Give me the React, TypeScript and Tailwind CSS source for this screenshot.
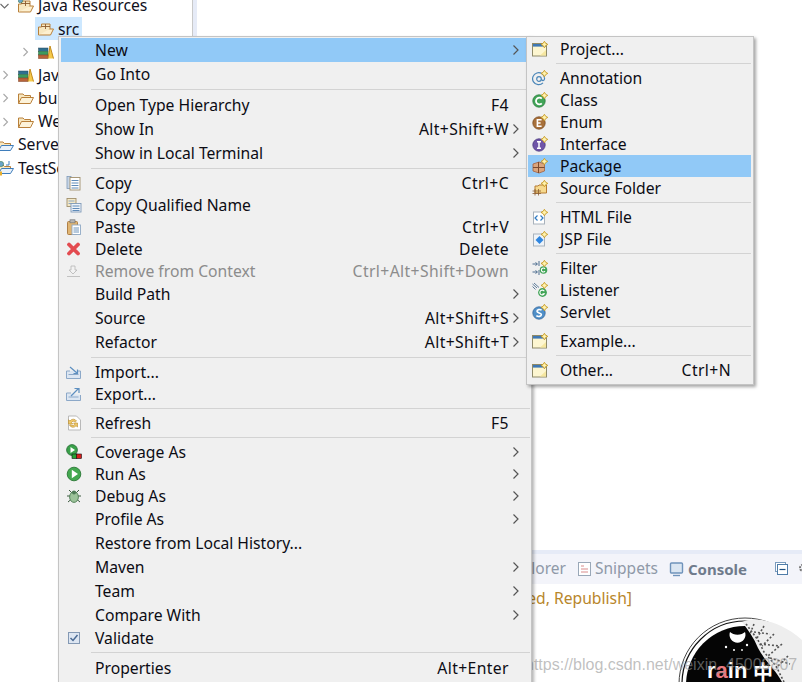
import React from 'react';

const Plus = () => (
  <path
    d="M12.4 0.3 L13.7 2.3 L15.8 3.4 L13.7 4.6 L12.4 6.8 L11.1 4.6 L9 3.4 L11.1 2.3 Z"
    fill="#fff2ae"
    stroke="#c79a22"
    strokeWidth="0.9"
  />
);

const Ic: React.FC<{ children: React.ReactNode }> = ({ children }) => (
  <svg width="16" height="16" viewBox="0 0 16 16" className="block shrink-0">
    {children}
  </svg>
);

const Ball: React.FC<{ color: string; dark: string; letter: string }> = ({ color, dark, letter }) => (
  <Ic>
    <circle cx="7" cy="9" r="6.2" fill={color} stroke={dark} strokeWidth="0.8" />
    {letter === 'C' && <path d="M9.8 6.6 A3.4 3.4 0 1 0 9.8 11.4" fill="none" stroke="#fff" strokeWidth="1.8" />}
    {letter === 'E' && <path d="M9.6 5.8 H5.4 V12.2 H9.6 M5.4 9 H8.6" fill="none" stroke="#fff" strokeWidth="1.6" />}
    {letter === 'I' && <path d="M5 5.8 H9 M7 5.8 V12.2 M5 12.2 H9" fill="none" stroke="#fff" strokeWidth="1.5" />}
    {letter === 'S' && <path d="M9.6 6.2 C8 5 4.8 5.4 5 7.4 C5.2 9.2 9.4 8.6 9.4 10.6 C9.4 12.6 6 13 4.4 11.6" fill="none" stroke="#fff" strokeWidth="1.6" />}
    <Plus />
  </Ic>
);

const WizWindow = () => (
  <Ic>
    <rect x="0.5" y="2.5" width="14" height="12.5" fill="#fdf6d0" stroke="#8f8a68" strokeWidth="1" />
    <rect x="1" y="3" width="13" height="2.6" fill="#3f78b5" />
    <path d="M14 9 L8 14.5 H14 Z" fill="#f6e7a0" />
    <Plus />
  </Ic>
);

const FolderOpen = () => (
  <Ic>
    <path d="M0.5 13.5 V4 H5 L6.5 5.5 H12.5 V8" fill="#f7e7c0" stroke="#b9803a" strokeWidth="1" />
    <path d="M0.5 13.5 L3.5 7.5 H15.5 L12.5 13.5 Z" fill="#fdf3da" stroke="#b9803a" strokeWidth="1" />
  </Ic>
);

const PackageFolder: React.FC<{ globe?: boolean }> = ({ globe }) => (
  <Ic>
    <path d="M0.5 14 L3.5 8 H15.5 L12.5 14 Z" fill="#fdf0d0" stroke="#b9803a" strokeWidth="1" />
    <path d="M0.5 14 V6 H3.5 V3 H12 V8" fill="#f7e7c0" stroke="#b9803a" strokeWidth="1" />
    <path d="M7.5 3 V8 M3.5 5.5 H12" stroke="#8a5a2e" strokeWidth="0.9" />
    {globe && <circle cx="2.5" cy="2.5" r="2.3" fill="#6aa4c8" stroke="#3a7a50" strokeWidth="0.6" />}
  </Ic>
);

const ServerFolder: React.FC<{ deco?: boolean }> = ({ deco }) => (
  <Ic>
    <path d="M0.5 13.5 V5 H5 L6.5 6.5 H12.5 V8" fill="#f7e7c0" stroke="#b9803a" strokeWidth="1" />
    <path d="M0.5 13.5 L3.5 8.5 H15.5 L12.5 13.5 Z" fill="#eaf2fb" stroke="#3f7dbb" strokeWidth="1" />
    {deco && <circle cx="3" cy="4" r="2.6" fill="#6aa4c8" stroke="#3a7a50" strokeWidth="0.6" />}
    {deco && <path d="M11 1 V5 H8" fill="none" stroke="#3f7dbb" strokeWidth="1" />}
    {deco && <rect x="0" y="11.5" width="4" height="4" fill="#e8b030" />}
  </Ic>
);

const Books = () => (
  <Ic>
    <rect x="0.5" y="4" width="9.5" height="3.3" fill="#2f6f8f" stroke="#28485c" strokeWidth="0.5" />
    <rect x="0.5" y="7.5" width="9.5" height="3.3" fill="#3c9a5c" stroke="#2a6a42" strokeWidth="0.5" />
    <rect x="0.5" y="11" width="9.5" height="3.5" fill="#b8633a" stroke="#7a3c20" strokeWidth="0.5" />
    <path d="M10 14.5 L12 2 L15.5 14.5" fill="#f5c94a" stroke="#c28a1c" strokeWidth="1" />
  </Ic>
);

const icons: Record<string, React.ReactNode> = {
  copy: (
    <Ic>
      <rect x="1" y="1.5" width="4" height="12" fill="#c6d5e6" stroke="#7f9ab8" strokeWidth="0.8" />
      <rect x="4" y="2.5" width="10" height="12.5" fill="#fff" stroke="#a08f6c" strokeWidth="0.9" />
      <path d="M5.5 5.5 H12.5 M5.5 8 H12.5 M5.5 10.5 H12.5 M5.5 13 H12.5" stroke="#5f8bb8" strokeWidth="1" />
    </Ic>
  ),
  copyq: (
    <Ic>
      <rect x="1" y="1.5" width="9" height="8" fill="#f3e8c6" stroke="#a08f6c" strokeWidth="0.9" />
      <path d="M2.5 4 H8.5 M2.5 6.5 H8.5" stroke="#8fa8c4" />
      <rect x="5" y="6.5" width="10" height="8.5" fill="#eef3f9" stroke="#7f9ab8" strokeWidth="0.9" />
      <path d="M6.5 9 H13.5 M6.5 11.5 H13.5 M6.5 13.5 H13.5" stroke="#5f8bb8" />
    </Ic>
  ),
  paste: (
    <Ic>
      <rect x="1.5" y="2.5" width="10" height="13" rx="1" fill="#e0b573" stroke="#a8763c" strokeWidth="0.9" />
      <rect x="4" y="0.8" width="5" height="3" fill="#b5b5b5" stroke="#777" strokeWidth="0.7" />
      <rect x="6" y="6" width="8.5" height="9.5" fill="#fff" stroke="#8fa8c4" strokeWidth="0.9" />
      <path d="M7.5 9 H13 M7.5 11 H13 M7.5 13 H13" stroke="#6f94bb" />
    </Ic>
  ),
  del: (
    <Ic>
      <path d="M3 3.5 L12 12.5 M12 3.5 L3 12.5" stroke="#e34b50" strokeWidth="3.8" strokeLinecap="round" />
    </Ic>
  ),
  remove: (
    <Ic>
      <path d="M5 3 H9 V7 H11 L7 11 L3 7 H5 Z" fill="#f2f2f2" stroke="#b5b5b5" strokeWidth="0.8" />
      <path d="M1 13.5 H14" stroke="#c2c2c2" />
    </Ic>
  ),
  import: (
    <Ic>
      <path d="M0.5 7 V14.5 H14.5 V7 H12 M0.5 7 H4" fill="#dce6f2" stroke="#8ca8c8" strokeWidth="1" />
      <path d="M2.5 10.5 H12.5" stroke="#8ca8c8" />
      <path d="M4 3 L11 9 M11.5 5.5 V9.5 H7.5" fill="none" stroke="#5d8fc0" strokeWidth="1.2" />
    </Ic>
  ),
  export: (
    <Ic>
      <path d="M0.5 7 V14.5 H14.5 V9 M0.5 7 H5" fill="#dce6f2" stroke="#8ca8c8" strokeWidth="1" />
      <path d="M2.5 11 H12.5" stroke="#8ca8c8" />
      <path d="M5 10 L12.5 2.5 M8.5 2.5 H13 V7" fill="none" stroke="#5d8fc0" strokeWidth="1.2" />
    </Ic>
  ),
  refresh: (
    <Ic>
      <path d="M2.5 1 H10.5 L14.5 5 V15 H2.5 Z" fill="#fff" stroke="#b9b9b9" />
      <path d="M10.5 6 A3.8 3.8 0 0 0 4 6 L2.5 4.8 V9 H6.8 L5.5 7.6 A2.2 2.2 0 0 1 9.2 7 Z" fill="#f0c968" stroke="#b9892c" strokeWidth="0.6" />
      <path d="M3.5 10 A3.8 3.8 0 0 0 10 10.8 L11.5 12 V8 H7.5 L8.7 9.2 A2.2 2.2 0 0 1 5 9.8 Z" fill="#f0c968" stroke="#b9892c" strokeWidth="0.6" />
    </Ic>
  ),
  coverage: (
    <Ic>
      <circle cx="6" cy="6" r="5.4" fill="#3aa14a" stroke="#256b32" strokeWidth="0.8" />
      <path d="M4.5 3 L9 6 L4.5 9 Z" fill="#fff" />
      <rect x="6" y="10" width="5" height="4.5" fill="#27a236" stroke="#111" strokeWidth="0.6" />
      <rect x="10.5" y="10" width="5" height="4.5" fill="#d81e1e" stroke="#111" strokeWidth="0.6" />
    </Ic>
  ),
  run: (
    <Ic>
      <circle cx="8" cy="8" r="6.8" fill="#43a84f" stroke="#2a7836" strokeWidth="0.9" />
      <path d="M5.8 3.8 L12 8 L5.8 12.2 Z" fill="#fff" />
    </Ic>
  ),
  debug: (
    <Ic>
      <path d="M3 2 L6 5 M13 2 L10 5 M1 8 H4 M15 8 H12 M2 14 L5 11.5 M14 14 L11 11.5" stroke="#3d5a40" strokeWidth="1" />
      <ellipse cx="8" cy="9" rx="4.4" ry="5.4" fill="#9cc39a" stroke="#4d7a52" strokeWidth="0.9" />
      <circle cx="8" cy="4.6" r="2" fill="#4e7a56" />
    </Ic>
  ),
  check: (
    <Ic>
      <rect x="2.5" y="2.5" width="11" height="11" fill="#dde6f2" stroke="#8499b4" />
      <path d="M4.5 8 L7 10.5 L11.5 5" fill="none" stroke="#4a6a94" strokeWidth="1.5" />
    </Ic>
  ),
  project: <WizWindow />,
  annotation: (
    <Ic>
      <path d="M11 12.8 A6 6 0 1 1 12.6 8.5 C12.6 11 9.6 11.4 9.6 9" fill="none" stroke="#4a86b8" strokeWidth="1.2" />
      <circle cx="7" cy="9" r="2.3" fill="none" stroke="#4a86b8" strokeWidth="1.2" />
      <Plus />
    </Ic>
  ),
  class: <Ball color="#41a457" dark="#2a7d3e" letter="C" />,
  enum: <Ball color="#a8703a" dark="#7c4e24" letter="E" />,
  interface: <Ball color="#6f55a8" dark="#4d3a80" letter="I" />,
  package: (
    <Ic>
      <path d="M1 6 L7 4 L12.5 6 V13 L7 15 L1 13 Z" fill="#dba57c" stroke="#a4603e" strokeWidth="0.8" />
      <path d="M6.5 4 V15 M1 9.5 H12.5" stroke="#7c4a2e" strokeWidth="1" />
      <Plus />
    </Ic>
  ),
  sourceFolder: (
    <Ic>
      <path d="M3 13 V6 H6 L7 5 H14.5 V13 Z" fill="#f6d98e" stroke="#b67c32" />
      <path d="M0.5 11 H9 M0.5 13.5 H9 M3 9 V15.5 M6.5 9 V15.5" stroke="#8a5a2e" strokeWidth="0.8" />
      <Plus />
    </Ic>
  ),
  html: (
    <Ic>
      <rect x="1.5" y="3" width="11" height="12" fill="#fff" stroke="#a8b2bc" />
      <path d="M5.5 6.5 L3 9 L5.5 11.5 M8.5 6.5 L11 9 L8.5 11.5" fill="none" stroke="#2f7bc4" strokeWidth="1.2" />
      <Plus />
    </Ic>
  ),
  jsp: (
    <Ic>
      <rect x="1.5" y="3" width="11" height="12" fill="#eef3f8" stroke="#a8b2bc" />
      <path d="M7.5 5 L11.5 9 L7.5 13 L3.5 9 Z" fill="#2f86e0" />
      <Plus />
    </Ic>
  ),
  filter: (
    <Ic>
      <path d="M0.5 4 H5 M3.5 2.5 L5.5 4 L3.5 5.5 M0.5 12 H5 M3.5 10.5 L5.5 12 L3.5 13.5 M7 1 V6 M7 10 V15" fill="none" stroke="#4f6f90" strokeWidth="1" />
      <circle cx="11.5" cy="10" r="3.8" fill="#41a457" />
      <path d="M13 8.8 A2 2 0 1 0 13 11.2" fill="none" stroke="#fff" strokeWidth="1.1" />
      <Plus />
    </Ic>
  ),
  listener: (
    <Ic>
      <path d="M0.5 2 L5 6 M2 1 L7 5.5 M0.5 4.5 L3.5 7.5" stroke="#4f6f90" strokeWidth="0.9" />
      <circle cx="10.5" cy="10.5" r="4.4" fill="#41a457" />
      <path d="M12.3 9.2 A2.4 2.4 0 1 0 12.3 11.8 H10.5" fill="none" stroke="#fff" strokeWidth="1.1" />
      <Plus />
    </Ic>
  ),
  servlet: <Ball color="#4f8fc8" dark="#3a6a9c" letter="S" />,
};

type Row = {
  sep?: boolean;
  label?: string;
  icon?: string;
  keys?: string;
  arrow?: boolean;
  tall?: boolean;
  active?: boolean;
  disabled?: boolean;
};

const mainRows: Row[] = [
  { label: 'New', arrow: true, tall: true, active: true },
  { label: 'Go Into', tall: true },
  { sep: true },
  { label: 'Open Type Hierarchy', keys: 'F4', tall: true },
  { label: 'Show In', keys: 'Alt+Shift+W', arrow: true, tall: true },
  { label: 'Show in Local Terminal', arrow: true, tall: true },
  { sep: true },
  { label: 'Copy', icon: 'copy', keys: 'Ctrl+C' },
  { label: 'Copy Qualified Name', icon: 'copyq' },
  { label: 'Paste', icon: 'paste', keys: 'Ctrl+V' },
  { label: 'Delete', icon: 'del', keys: 'Delete' },
  { label: 'Remove from Context', icon: 'remove', keys: 'Ctrl+Alt+Shift+Down', disabled: true },
  { label: 'Build Path', arrow: true, tall: true },
  { label: 'Source', keys: 'Alt+Shift+S', arrow: true, tall: true },
  { label: 'Refactor', keys: 'Alt+Shift+T', arrow: true, tall: true },
  { sep: true },
  { label: 'Import...', icon: 'import' },
  { label: 'Export...', icon: 'export' },
  { sep: true },
  { label: 'Refresh', icon: 'refresh', keys: 'F5' },
  { sep: true },
  { label: 'Coverage As', icon: 'coverage', arrow: true },
  { label: 'Run As', icon: 'run', arrow: true },
  { label: 'Debug As', icon: 'debug', arrow: true },
  { label: 'Profile As', arrow: true, tall: true },
  { label: 'Restore from Local History...', tall: true },
  { label: 'Maven', arrow: true, tall: true },
  { label: 'Team', arrow: true, tall: true },
  { label: 'Compare With', arrow: true, tall: true },
  { label: 'Validate', icon: 'check' },
  { sep: true },
  { label: 'Properties', keys: 'Alt+Enter', tall: true },
];

const subRows: Row[] = [
  { label: 'Project...', icon: 'project' },
  { sep: true },
  { label: 'Annotation', icon: 'annotation' },
  { label: 'Class', icon: 'class' },
  { label: 'Enum', icon: 'enum' },
  { label: 'Interface', icon: 'interface' },
  { label: 'Package', icon: 'package', active: true },
  { label: 'Source Folder', icon: 'sourceFolder' },
  { sep: true },
  { label: 'HTML File', icon: 'html' },
  { label: 'JSP File', icon: 'jsp' },
  { sep: true },
  { label: 'Filter', icon: 'filter' },
  { label: 'Listener', icon: 'listener' },
  { label: 'Servlet', icon: 'servlet' },
  { sep: true },
  { label: 'Example...', icon: 'project' },
  { sep: true },
  { label: 'Other...', icon: 'project', keys: 'Ctrl+N' },
];

const MenuRow: React.FC<{ row: Row; sub?: boolean }> = ({ row, sub }) => (
  <div
    className={`flex items-center relative pt-[2px] ${row.tall ? 'h-6' : 'h-[22px]'} ${sub ? 'pl-[32px] pr-[20px]' : 'pl-[34px] pr-[21px]'} ${
      row.active ? 'bg-[#91c9f7]' : ''
    } ${row.disabled ? 'text-[#8c8c8c]' : 'text-[#0c0c14]'}`}
  >
    {row.icon && <span className={`absolute top-[3px] ${sub ? 'left-[4px]' : 'left-[5px]'}`}>{icons[row.icon]}</span>}
    <span className="flex-1 whitespace-nowrap">{row.label}</span>
    {row.keys && <span className="whitespace-nowrap tracking-[0.4px]">{row.keys}</span>}
    {row.arrow && (
      <span className="absolute right-[10px] top-1/2 -translate-y-1/2">
        <svg width="8" height="12" viewBox="0 0 8 12" className="block">
          <path d="M1.5 1.5 L6 6 L1.5 10.5" fill="none" stroke="#555" strokeWidth="1.2" />
        </svg>
      </span>
    )}
  </div>
);

const TreeRow: React.FC<{
  indent: string;
  label: string;
  chevron?: 'open' | 'closed';
  icon: React.ReactNode;
  selected?: boolean;
}> = ({ indent, label, chevron, icon, selected }) => (
  <div className={`flex items-center h-[23.2px] ${indent}`}>
    {chevron && (
      <svg width="10" height="10" viewBox="0 0 10 10" className="mr-[8px] shrink-0">
        {chevron === 'open' ? (
          <path d="M0.5 3 L4.5 7 L8.5 3" fill="none" stroke="#6b6b6b" strokeWidth="1.1" />
        ) : (
          <path d="M3.5 1 L7.5 5 L3.5 9" fill="none" stroke="#a8a8a8" strokeWidth="1.1" />
        )}
      </svg>
    )}
    <div className={`flex items-center gap-[4px] h-[23px] ${selected ? 'bg-[#cde8ff] px-[3px]' : ''}`}>
      {icon}
      <span className="whitespace-nowrap text-[#10101c] pt-[1px]">{label}</span>
    </div>
  </div>
);

const Logo = () => (
  <svg width="132" height="72" viewBox="0 0 132 72" className="block">
    <circle cx="75" cy="74" r="66" fill="#fff" stroke="#444" strokeWidth="1" />
    <circle cx="75" cy="74" r="63" fill="none" stroke="#111" strokeWidth="1.2" />
    <circle cx="75" cy="75" r="59" fill="#050505" />
    <path d="M72 12 C84 6 110 10 132 30 V72 H112 C106 60 94 50 88 38 C84 28 78 20 72 12 Z" fill="#eeeeee" />
    <path
      d="M76 14 L88 30 L94 42 L106 56 L114 72 M84 14 L80 24 M94 16 L86 30 M104 24 L92 36 M112 34 L98 46 M118 46 L106 58 M84 22 L100 24 M90 34 L110 36 M100 48 L120 54"
      stroke="#555"
      strokeWidth="1.6"
      fill="none"
      strokeDasharray="2 2"
    />
    <path d="M60 22 A8 8 0 1 0 75 22 A9 6 0 0 1 60 22 Z" fill="#fff" />
    <circle cx="56" cy="37" r="1.2" fill="#fff" />
    <circle cx="77" cy="35" r="1.2" fill="#fff" />
    <circle cx="64" cy="40" r="1" fill="#fff" />
    <circle cx="72" cy="40" r="0.9" fill="#fff" />
  </svg>
);

export default function App() {
  return (
    <div className="relative w-[802px] h-[682px] overflow-hidden bg-white text-[15.7px] font-['Noto_Sans',sans-serif]">
      <div className="flex h-full">
        {/* Project tree */}
        <div className="w-[193px] shrink-0 border-r border-[#c9c9c9] overflow-hidden">
          <div className="-mt-[6px]">
            <TreeRow indent="pl-0" label="Java Resources" chevron="open" icon={<PackageFolder globe />} />
            <TreeRow indent="pl-[35px]" label="src" icon={<PackageFolder />} selected />
            <TreeRow indent="pl-[20px]" label="Libraries" chevron="closed" icon={<Books />} />
            <TreeRow indent="pl-0" label="JavaScript Resources" chevron="closed" icon={<Books />} />
            <TreeRow indent="pl-0" label="build" chevron="closed" icon={<FolderOpen />} />
            <TreeRow indent="pl-0" label="WebContent" chevron="closed" icon={<FolderOpen />} />
            <TreeRow indent="-ml-[2px]" label="Servers" icon={<ServerFolder />} />
            <TreeRow indent="-ml-[2px]" label="TestServlet" icon={<ServerFolder deco />} />
          </div>
        </div>
        <div className="w-[4px] shrink-0 bg-[#e6ebf7]" />

        {/* Editor and console */}
        <div className="flex-1 flex flex-col min-w-0">
          <div className="h-[550px] shrink-0" />
          <div className="h-[4px] shrink-0 bg-[#e6ebf7]" />
          <div className="h-[30px] shrink-0 bg-[#f3f4fa] flex items-center justify-end pr-[55px] gap-[11px] relative">
            <span className="text-[#8f99a8] whitespace-nowrap text-[15.5px]">Project Explorer</span>
            <span className="flex items-center gap-[2px] text-[#8f99a8] whitespace-nowrap text-[15.5px]">
              <Ic>
                <rect x="1.5" y="1.5" width="12" height="13" fill="#fff" stroke="#9aa8b8" />
                <path d="M4 5 H7 M4 8 H11 M4 11 H11" stroke="#d98c8c" strokeWidth="1.2" />
              </Ic>
              Snippets
            </span>
            <span className="flex items-center gap-[3px] font-bold text-[#6f7b8c] whitespace-nowrap text-[15px]">
              <Ic>
                <rect x="1.5" y="2" width="12" height="10" rx="1" fill="#dbe6f2" stroke="#6f93bb" strokeWidth="1.4" />
                <path d="M4 14.5 H11" stroke="#6f93bb" strokeWidth="1.4" />
              </Ic>
              Console
            </span>
            <span className="absolute right-[13px] top-[8px]">
              <svg width="14" height="14" viewBox="0 0 14 14" className="block">
                <rect x="0.5" y="0.5" width="10" height="9" fill="#fff" stroke="#7a9bbd" />
                <rect x="2.5" y="2.5" width="10" height="10" fill="#fff" stroke="#4f7ca8" />
                <path d="M4.5 7.5 H10.5" stroke="#1f4f80" strokeWidth="1.2" />
              </svg>
            </span>
            <span className="absolute -right-[6px] top-[7px]">
              <svg width="10" height="14" viewBox="0 0 10 14" className="block">
                <circle cx="5" cy="7" r="3" fill="none" stroke="#777" strokeWidth="2" strokeDasharray="2 1" />
              </svg>
            </span>
          </div>
          <div className="flex-1 flex justify-end pr-[170px] pt-[3px]">
            <span className="text-[#b8862b] whitespace-nowrap">Tomcat v8.5 Server at localhost [Started, Republish]</span>
          </div>
        </div>
      </div>

      {/* Logo in the console corner */}
      <div className="absolute right-0 bottom-0">
        <Logo />
        <span className="absolute left-[37px] top-[50px] font-['Liberation_Sans',sans-serif] text-[22px] leading-none font-bold text-white whitespace-nowrap">
          r<span className="text-[#e87a80]">a</span>in
        </span>
        <span className="absolute left-[83px] top-[52px] font-['Noto_Sans_CJK_SC',sans-serif] text-[20px] leading-none font-bold text-white whitespace-nowrap">
          中
        </span>
      </div>

      {/* Watermark */}
      <div className="absolute left-[525px] top-[653px] font-['Liberation_Sans',sans-serif] text-[16px] text-[#969696]/60 whitespace-nowrap">
        https://blog.csdn.net/weixin_45009807
      </div>

      {/* Context menu */}
      <div className="absolute left-[58px] top-[36px] w-[474px] h-[660px] bg-[#f0f0f0] border border-[#c4c4c4] pl-[2px] pr-[1px] pt-[1px] shadow-[2px_2px_3px_rgba(0,0,0,0.3)]">
        {mainRows.map((row, i) =>
          row.sep ? (
            <div key={i} className="h-[7px] pl-[30px] flex items-center">
              <div className="h-px w-full bg-[#d3d3d3]" />
            </div>
          ) : (
            <MenuRow key={i} row={row} />
          )
        )}
      </div>

      {/* New submenu */}
      <div className="absolute left-[526px] top-[36px] w-[228px] h-[349px] bg-[#f0f0f0] border border-[#c4c4c4] pl-[1px] pr-[2px] pt-[1px] shadow-[2px_2px_3px_rgba(0,0,0,0.35)]">
        {subRows.map((row, i) =>
          row.sep ? (
            <div key={i} className="h-[7px] pl-[28px] flex items-center">
              <div className="h-px w-full bg-[#d3d3d3]" />
            </div>
          ) : (
            <MenuRow key={i} row={row} sub />
          )
        )}
      </div>
    </div>
  );
}
